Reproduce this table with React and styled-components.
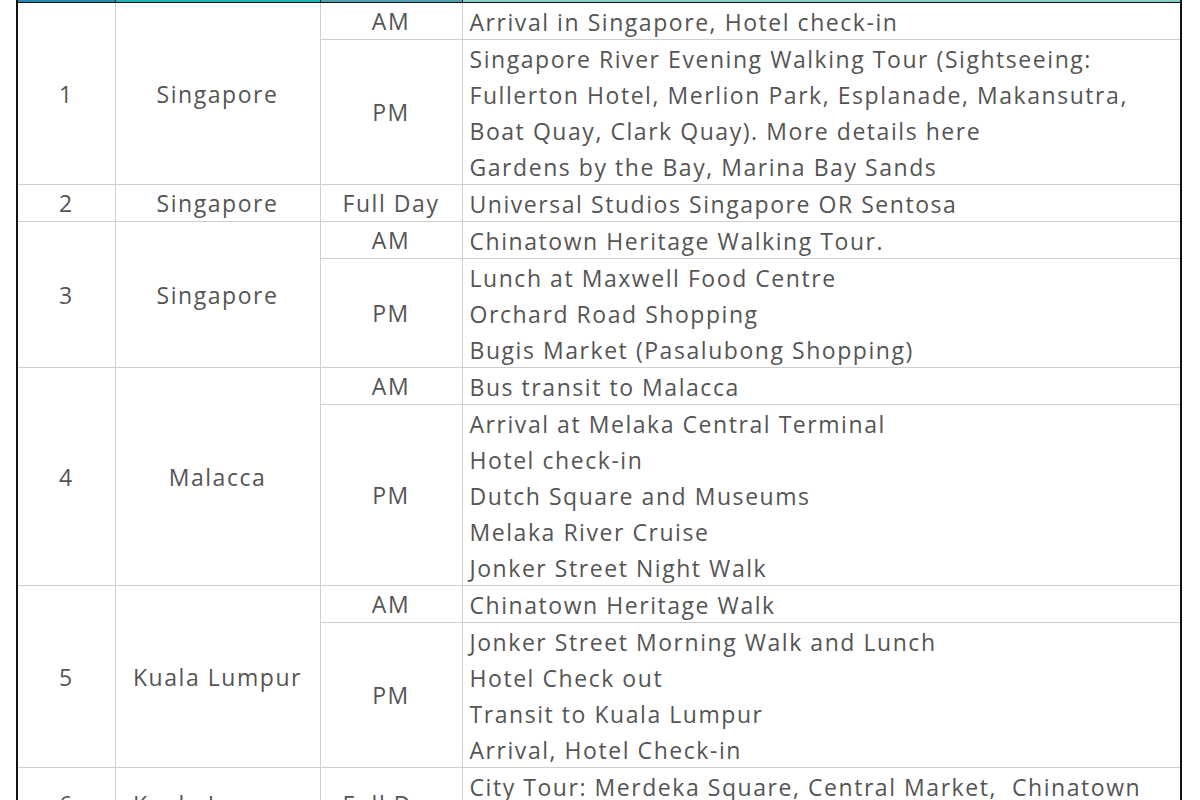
import styled, { createGlobalStyle } from "styled-components";

const GlobalStyle = createGlobalStyle`
  html, body {
    margin: 0;
    padding: 0;
    background: #ffffff;
  }
  body {
    font-family: "Open Sans", "Liberation Sans", sans-serif;
    overflow: hidden;
  }
`;

const headerColors = ["#1f8db1", "#20b3b3", "#4ea3b3", "#84cfc6"];

const days = [
  {
    day: "1",
    place: "Singapore",
    slots: [
      { time: "AM", lines: ["Arrival in Singapore, Hotel check-in"] },
      {
        time: "PM",
        lines: [
          "Singapore River Evening Walking Tour (Sightseeing:",
          "Fullerton Hotel, Merlion Park, Esplanade, Makansutra,",
          "Boat Quay, Clark Quay). More details here",
          "Gardens by the Bay, Marina Bay Sands",
        ],
      },
    ],
  },
  {
    day: "2",
    place: "Singapore",
    slots: [
      { time: "Full Day", lines: ["Universal Studios Singapore OR Sentosa"] },
    ],
  },
  {
    day: "3",
    place: "Singapore",
    slots: [
      { time: "AM", lines: ["Chinatown Heritage Walking Tour."] },
      {
        time: "PM",
        lines: [
          "Lunch at Maxwell Food Centre",
          "Orchard Road Shopping",
          "Bugis Market (Pasalubong Shopping)",
        ],
      },
    ],
  },
  {
    day: "4",
    place: "Malacca",
    slots: [
      { time: "AM", lines: ["Bus transit to Malacca"] },
      {
        time: "PM",
        lines: [
          "Arrival at Melaka Central Terminal",
          "Hotel check-in",
          "Dutch Square and Museums",
          "Melaka River Cruise",
          "Jonker Street Night Walk",
        ],
      },
    ],
  },
  {
    day: "5",
    place: "Kuala Lumpur",
    slots: [
      { time: "AM", lines: ["Chinatown Heritage Walk"] },
      {
        time: "PM",
        lines: [
          "Jonker Street Morning Walk and Lunch",
          "Hotel Check out",
          "Transit to Kuala Lumpur",
          "Arrival, Hotel Check-in",
        ],
      },
    ],
  },
  {
    day: "6",
    place: "Kuala Lumpur",
    slots: [
      {
        time: "Full Day",
        lines: [
          "City Tour: Merdeka Square, Central Market,  Chinatown",
          "(Petaling Street), Little India, Batu Caves",
        ],
      },
    ],
  },
];

const Page = styled.div`
  height: 800px;
  overflow: hidden;
  padding-left: 16px;
`;

const Table = styled.table`
  border-collapse: collapse;
  table-layout: fixed;
  width: 1166px;
  border-left: 2px solid #111111;
  border-right: 2px solid #111111;
  color: #555555;
  font-size: 23px;
  letter-spacing: 1.55px;
`;

const HeadCell = styled.th`
  height: 2px;
  padding: 0;
  background: ${(p) => p.$bg};
  border-left: 1px solid #111111;
  border-bottom: 1px solid #111111;
`;

const Cell = styled.td`
  padding: 0;
  border: 1px solid #cfcfcf;
  line-height: 36px;
  text-align: center;
  vertical-align: middle;
  white-space: nowrap;
`;

const TextCell = styled(Cell)`
  text-align: left;
  padding-left: 7px;
  white-space: pre;
`;

const Line = styled.div`
  height: 36px;
  padding-top: 1px;
  box-sizing: border-box;
`;

function DayRows({ day }) {
  return day.slots.map((slot, i) => (
    <tr key={slot.time}>
      {i === 0 && (
        <>
          <Cell rowSpan={day.slots.length}>{day.day}</Cell>
          <Cell rowSpan={day.slots.length}>{day.place}</Cell>
        </>
      )}
      <Cell>{slot.time}</Cell>
      <TextCell>
        {slot.lines.map((line) => (
          <Line key={line}>{line}</Line>
        ))}
      </TextCell>
    </tr>
  ));
}

export default function App() {
  return (
    <Page>
      <GlobalStyle />
      <Table>
        <colgroup>
          <col style={{ width: 98 }} />
          <col style={{ width: 205 }} />
          <col style={{ width: 142 }} />
          <col />
        </colgroup>
        <thead>
          <tr>
            {headerColors.map((c) => (
              <HeadCell key={c} $bg={c} />
            ))}
          </tr>
        </thead>
        <tbody>
          {days.map((d) => (
            <DayRows key={d.day} day={d} />
          ))}
        </tbody>
      </Table>
    </Page>
  );
}
